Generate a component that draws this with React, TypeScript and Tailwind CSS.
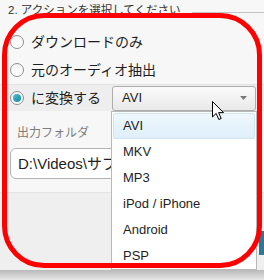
import React from "react";

const jp = "font-['Liberation_Sans','Noto_Sans_CJK_JP',sans-serif]";

function Radio({ checked }: { checked?: boolean }) {
  return (
    <div className="w-[14px] h-[14px] rounded-full border border-[#8f8f8f] bg-gradient-to-b from-[#f4f4f4] to-[#ffffff] flex items-center justify-center shrink-0">
      {checked && (
        <div className="w-[8px] h-[8px] rounded-full bg-gradient-to-br from-[#49c0d4] to-[#15889e]" />
      )}
    </div>
  );
}

const items = ["AVI", "MKV", "MP3", "iPod / iPhone", "Android", "PSP"];

export default function App() {
  return (
    <div className={`relative w-[264px] h-[280px] overflow-hidden bg-[#f7f7f7] text-[#1e1e1e] ${jp}`}>
      {/* header */}
      <div className="flex items-start h-[28px] pl-[8px] pt-[2px]">
        <span className="text-[11.5px] leading-[16px] text-[#333] whitespace-nowrap">2. アクションを選択してください</span>
        <div className="flex-1 h-px bg-[#c4c4c4] mt-[10px] ml-[11px]" />
      </div>

      {/* rows */}
      <div className="flex items-center h-[28px] pl-[10px] gap-[7px]">
        <Radio />
        <span className="text-[14px] leading-[18px]">ダウンロードのみ</span>
      </div>
      <div className="flex items-center h-[28px] pl-[10px] gap-[7px]">
        <Radio />
        <span className="text-[14px] leading-[18px]">元のオーディオ抽出</span>
      </div>
      <div className="flex items-center h-[27px] pl-[10px] pr-[8px] gap-[7px] bg-[#eeeeee] border-t border-[#e2e2e2]">
        <Radio checked />
        <span className="text-[14px] leading-[18px]">に変換する</span>
        <div className="ml-auto w-[144px] h-[25px] rounded-[3px] border border-[#acacac] bg-gradient-to-b from-[#fbfbfb] to-[#e9e9e9] flex items-center pl-[9px] pr-[8px]">
          <span className="text-[13px] leading-[16px] font-['Liberation_Sans',sans-serif]">AVI</span>
          <svg className="ml-auto" width="7" height="4" viewBox="0 0 7 4">
            <path d="M0 0 L7 0 L3.5 4 Z" fill="#7a7a7a" />
          </svg>
        </div>
      </div>

      {/* output folder */}
      <div className="pl-[17px] pt-[13px]">
        <span className="text-[12px] leading-[18px] text-[#7c7c7c] block">出力フォルダ</span>
      </div>
      <div className="pl-[10px] mt-[6px]">
        <div className="w-[102px] h-[31px] rounded-l-[6px] border border-[#b4b4b4] bg-white flex items-center pl-[7px] overflow-hidden">
          <span className="text-[15px] leading-[18px] whitespace-nowrap">D:\Videos\サブ</span>
        </div>
      </div>

      {/* lower gray section */}
      <div className="mt-[13px] h-[78px] bg-[#efefef] border-t border-[#e4e4e4]" />
      <div className="h-[10px] bg-gradient-to-b from-[#b9b9b9] to-[#e6e6e6]" />

      {/* teal edge at right */}
      <div className="absolute left-[259px] top-[231px] w-[5px] h-[24px] bg-[#2d7893]" />

      {/* dropdown list */}
      <div className="absolute left-[111px] top-[111px] w-[146px] h-[159px] bg-white border border-[#b9b9b9] pt-px px-px font-['Liberation_Sans',sans-serif]">
        {items.map((it, i) => (
          <div
            key={it}
            className={
              i === 0
                ? "h-[26px] flex items-center pl-[9px] text-[13px] leading-[16px] rounded-[2px] border border-[#cfe6f6] bg-gradient-to-b from-[#eef7fd] to-[#dfeffa]"
                : "h-[26px] flex items-center pl-[10px] text-[13px] leading-[16px]"
            }
          >
            {it}
          </div>
        ))}
      </div>

      {/* cursor */}
      <svg className="absolute left-[212px] top-[101px]" width="13" height="20" viewBox="0 0 13 20">
        <path
          d="M0.5 0.5 L0.5 16 L4.2 12.4 L6.8 18.5 L9.2 17.5 L6.6 11.6 L11.5 11.6 Z"
          fill="#ffffff"
          stroke="#000000"
          strokeWidth="1"
          strokeLinejoin="round"
        />
      </svg>

      {/* red annotation */}
      <div className="absolute left-[2px] top-[13px] w-[260px] h-[255px] border-[5px] border-[#ff0000] rounded-[42px] pointer-events-none" />
    </div>
  );
}
